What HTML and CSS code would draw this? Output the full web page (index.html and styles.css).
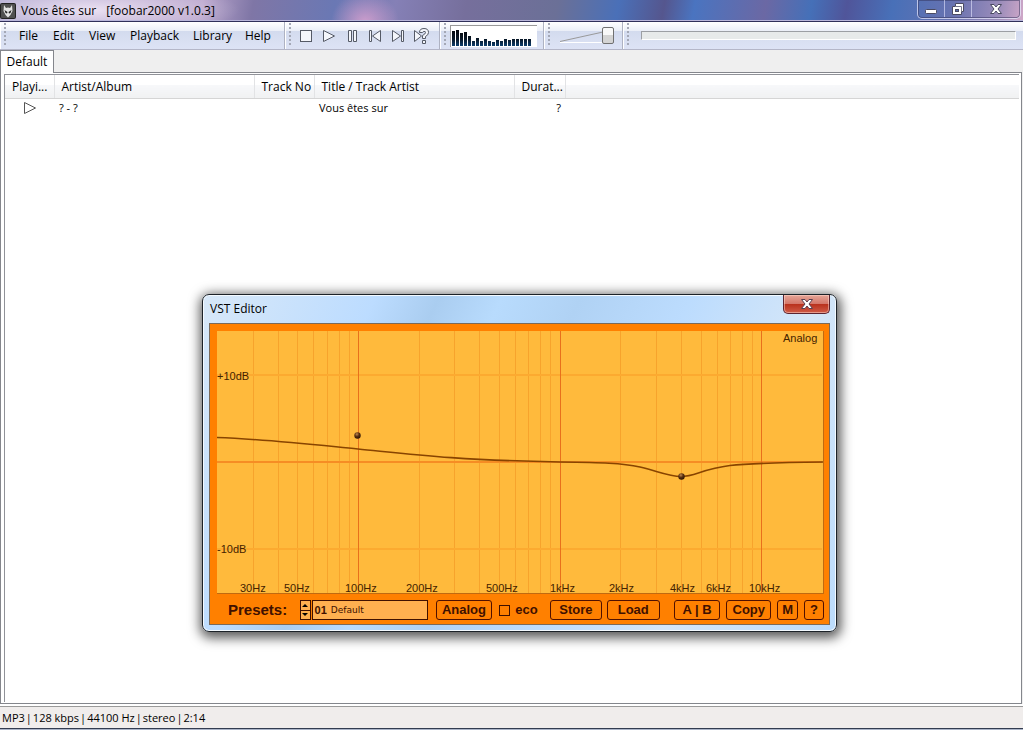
FILE: index.html
```
<!DOCTYPE html>
<html lang="en">
<head>
<meta charset="utf-8">
<title>foobar2000</title>
<link rel="stylesheet" href="styles.css">
</head>
<body>
<div class="app">
  <header class="titlebar">
    <svg class="logo" viewBox="0 0 16 16" aria-hidden="true">
      <rect width="16" height="16" rx="2" fill="#222"/>
      <rect x="1" y="1" width="14" height="14" rx="1" fill="#505050"/>
      <path d="M4 2 L6 5 Q8 4 10 5 L12 2 L12.500 8 Q11 12 8 14.500 Q5 12 3.500 8Z" fill="#e4e4e4"/>
      <path d="M4.500 7 L7.500 9 L7 10.500 L5.500 10Z M11.500 7 L8.500 9 L9 10.500 L10.500 10Z" fill="#222"/>
    </svg>
    <h1 class="title"><span>Vous êtes sur</span><span>[foobar2000 v1.0.3]</span></h1>
    <div class="window-buttons">
      <button aria-label="Minimize"><svg width="14" height="14" viewBox="0 0 14 14"><rect x="1.500" y="7.500" width="11" height="4" rx="1" fill="#fff" stroke="#4a4a62"/></svg></button>
      <button aria-label="Restore"><svg width="14" height="14" viewBox="0 0 14 14"><path d="M4.500 1.500h8v8h-2v3h-9v-8h3z" fill="#fff" stroke="#4a4a62"/><path d="M4 4.500h6.500v5" fill="none" stroke="#77778c"/><rect x="4.500" y="7.500" width="3" height="2" fill="#5b70ae" stroke="#4a4a62"/></svg></button>
      <button aria-label="Close"><svg width="14" height="14" viewBox="0 0 14 14"><path d="M1.500 2.500h3.500l2 2.500 2-2.500h3.500l-3.500 4.500 3.500 4.500h-3.500l-2-2.500-2 2.500h-3.500l3.500-4.500z" fill="#fff" stroke="#4a4a62"/></svg></button>
    </div>
  </header>

  <div class="rebar">
    <nav class="band menu">
      <button>File</button><button>Edit</button><button>View</button><button>Playback</button><button>Library</button><button>Help</button>
    </nav>
    <div class="band transport">
      <button aria-label="Stop"><svg width="16" height="16" viewBox="0 0 16 16"><rect x="2.500" y="2.500" width="11" height="11"/></svg></button>
      <button aria-label="Play"><svg width="16" height="16" viewBox="0 0 16 16"><path d="M2.500 2.500v11l11-5.500z"/></svg></button>
      <button aria-label="Pause"><svg width="16" height="16" viewBox="0 0 16 16"><path d="M4.500 2.500h3v11h-3zM9.500 2.500h3v11h-3z"/></svg></button>
      <button aria-label="Previous"><svg width="16" height="16" viewBox="0 0 16 16"><path d="M2.500 2.500h2v11h-2zM13.500 2.500v11l-8-5.500z"/></svg></button>
      <button aria-label="Next"><svg width="16" height="16" viewBox="0 0 16 16"><path d="M11.500 2.500h2v11h-2zM2.500 2.500v11l8-5.500z"/></svg></button>
      <button aria-label="Random"><svg width="16" height="16" viewBox="0 0 16 16"><path d="M1.500 2.500v11l7-5.500z"/><path d="M6.500 4.500q0-4 4.500-4t4.500 4q0 2.500-3 4v2h-3v-3q3-1.500 3-3t-1.500-1q-1 0-1.500 1zM9.500 12.500h3v3h-3z"/></svg></button>
    </div>
    <div class="band spectrum">
      <svg class="bars" viewBox="0 0 86 21" role="img" aria-label="Spectrum">
        <defs><linearGradient id="bar" x1="0" y1="5" x2="0" y2="21" gradientUnits="userSpaceOnUse"><stop offset="0" stop-color="#05070c"/><stop offset=".5" stop-color="#071524"/><stop offset="1" stop-color="#0d4478"/></linearGradient></defs>
        <path fill="url(#bar)" d="M1 5h3v15h-3zM5 4h3v16h-3zM9 7h3v13h-3zM13 6h3v14h-3zM17 10h3v10h-3zM21 15h3v5h-3zM25 12h3v8h-3zM29 15h3v5h-3zM33 13h3v7h-3zM37 15h3v5h-3zM41 16h3v4h-3zM45 14h3v6h-3zM49 15h3v5h-3zM53 13h3v7h-3zM57 14h3v6h-3zM61 13h3v7h-3zM65 13h3v7h-3zM69 13h3v7h-3zM73 13h3v7h-3zM77 13h3v7h-3z"/>
      </svg>
    </div>
    <div class="band volume">
      <svg width="54" height="16" viewBox="0 0 54 16" aria-hidden="true"><path d="M0 14.500h43" stroke="#fff"/><path d="M0 13.500L43 4" stroke="#999" fill="none"/></svg>
      <input type="range" value="100" aria-label="Volume">
    </div>
    <div class="band seek"><input type="range" value="0" aria-label="Seek"></div>
  </div>

  <div class="tabs" role="tablist"><button role="tab" aria-selected="true">Default</button></div>

  <main class="panel">
    <div class="list">
      <table class="playlist">
        <colgroup><col class="c-play"><col class="c-artist"><col class="c-no"><col class="c-title"><col class="c-dur"><col></colgroup>
        <thead><tr><th>Playi...</th><th>Artist/Album</th><th>Track No</th><th>Title / Track Artist</th><th>Durat...</th><th></th></tr></thead>
        <tbody><tr><td class="playing"><svg width="14" height="14" viewBox="0 0 14 14" role="img" aria-label="Playing"><path d="M1.500 1.500v11l11-5.500z" fill="none" stroke="#555"/></svg></td><td>? - ?</td><td></td><td>Vous êtes sur</td><td class="duration">?</td><td></td></tr></tbody>
      </table>
    </div>
  </main>

  <footer class="status"><span>MP3</span><span>|</span><span>128 kbps</span><span>|</span><span>44100 Hz</span><span>|</span><span>stereo</span><span>|</span><span>2:14</span></footer>
  <div class="taskbar"></div>
</div>

<section class="dialog" role="dialog" aria-labelledby="dialog-title">
  <header class="dialog-head">
    <h2 id="dialog-title">VST Editor</h2>
    <button class="dialog-close" aria-label="Close"><svg width="14" height="14" viewBox="0 0 14 14"><path d="M1.500 2.500h3.500l2 2.500 2-2.500h3.500l-3.500 4.500 3.500 4.500h-3.500l-2-2.500-2 2.500h-3.500l3.500-4.500z" fill="#fff" stroke="#5a4050"/></svg></button>
  </header>
  <div class="editor">
    <svg class="plot" viewBox="0 0 606 262" role="img" aria-label="Equalizer curve">
      <defs><radialGradient id="knob" cx=".4" cy=".3" r=".7"><stop offset="0" stop-color="#c08a50"/><stop offset=".5" stop-color="#5a3010"/><stop offset="1" stop-color="#2c1404"/></radialGradient></defs>
      <path class="grid" d="M36.500 0v262M61.500 0v262M80.500 0v262M96.500 0v262M110.500 0v262M122.500 0v262M132.500 0v262M202.500 0v262M237.500 0v262M262.500 0v262M282.500 0v262M298.500 0v262M311.500 0v262M323.500 0v262M333.500 0v262M403.500 0v262M439.500 0v262M464.500 0v262M484.500 0v262M500.500 0v262M513.500 0v262M525.500 0v262M535.500 0v262"/>
      <path class="level" d="M0 44h605M0 218h605"/>
      <path class="zero" d="M0 131h605"/>
      <path class="decade" d="M141.500 0v262M343.500 0v262M544.500 0v262"/>
      <path class="curve" d="M0 106.500C45 108 90 113 141 118S235 129 343 131C385 131.500 405 132 423 136C440 140 452 145.500 464 145.500C478 145.500 485 138 513 134.500C535 132 570 131.500 606 131"/>
      <circle cx="140.500" cy="104.500" r="3.200" fill="url(#knob)"/><circle cx="464.500" cy="145.500" r="3.200" fill="url(#knob)"/>
      <g class="labels"><text x="0" y="49">+10dB</text><text x="0" y="222">-10dB</text><text x="566" y="11">Analog</text>
      <text x="23" y="261">30Hz</text><text x="67" y="261">50Hz</text><text x="128" y="261">100Hz</text><text x="189" y="261">200Hz</text><text x="269" y="261">500Hz</text><text x="333" y="261">1kHz</text><text x="392" y="261">2kHz</text><text x="453" y="261">4kHz</text><text x="489" y="261">6kHz</text><text x="532" y="261">10kHz</text></g>
    </svg>
    <div class="controls">
      <label class="presets" for="preset">Presets:</label>
      <div class="spin"><button aria-label="Next preset"><svg width="6" height="3" viewBox="0 0 6 3"><path d="M0 3h6l-3-3z"/></svg></button><button aria-label="Previous preset"><svg width="6" height="3" viewBox="0 0 6 3"><path d="M0 0h6l-3 3z"/></svg></button></div>
      <div class="field"><b>01</b><input id="preset" type="text" value="Default"></div>
      <button class="btn w-analog">Analog</button>
      <label class="eco"><input type="checkbox">eco</label>
      <button class="btn w-store">Store</button>
      <button class="btn w-load">Load</button>
      <button class="btn w-ab">A | B</button>
      <button class="btn w-copy">Copy</button>
      <button class="btn w-m">M</button>
      <button class="btn w-help">?</button>
    </div>
  </div>
</section>
</body>
</html>
```
FILE: styles.css
```
* { box-sizing: border-box; }
body { margin: 0; font: 12px/16px "Open Sans", "Noto Sans", sans-serif; color: #000; background: #fff; }
button, input { font: inherit; color: inherit; margin: 0; padding: 0; }
button { border: 0; background: none; }
svg { display: block; }
.app { min-height: 100vh; display: flex; flex-direction: column; background: #efefef; }

.titlebar {
  height: 22px; display: flex; align-items: flex-start; gap: 5px;
  border-bottom: 1px solid #30305a; box-shadow: inset 0 -1px #b9b6da;
  background:
    radial-gradient(ellipse 150px 26px at 90px 10px, rgba(255,245,255,.75), transparent),
    radial-gradient(ellipse 34px 30px at 365px 22px, rgba(225,165,210,.8), transparent),
    linear-gradient(100deg, #aaa4cc 0, #b9a5cc 200px, #7f76a6 250px, #6a78b4 330px, #8580b6 390px, #766f9c 460px, #6b7097 550px, #4a70b8 610px, #55568e 655px, #4a74c0 685px, #6b68a4 755px, #4570b8 800px, #50559a 835px, #4870b8 880px, #6872b0 940px, #9a8cba 985px, #d0a8c8);
}
.logo { width: 16px; height: 16px; margin-top: 3px; }
.title { flex: 1; display: flex; gap: 10px; margin: 3px 0 0; font-size: 12px; font-weight: 400; line-height: 16px; }
.window-buttons { display: flex; height: 19px; margin-right: 2px; border: 1px solid rgba(235,235,255,.7); border-top: 0; border-radius: 0 0 5px 5px; box-shadow: inset 0 0 0 1px rgba(50,50,90,.5); }
.window-buttons button { width: 27px; height: 17px; display: grid; place-items: center; border-right: 1px solid rgba(230,230,255,.6); }
.window-buttons button:last-child { width: 48px; border: 0; }

.rebar { height: 28px; display: grid; grid-template-columns: 285px 155px 104px 79px 1fr; border-bottom: 1px solid #b4b6c8; background: linear-gradient(#fff 0, #eaeef7 9px, #d3dbee 9px, #dde3f5 100%); }
.band { display: flex; align-items: center; border-left: 1px solid #fff; border-right: 1px solid #aeb2c2; background: repeating-linear-gradient(#a4a8b6 0 2px, transparent 2px 4px) 3px 1px / 2px 24px no-repeat; }
.band:last-child { border-right: 0; }
.menu { display: grid; grid-template-columns: 34px 36px 41px 63px 52px 40px; padding-left: 10px; }
.menu button { height: 26px; text-align: left; padding-left: 8px; }
.transport { padding-left: 12px; gap: 7px; }
.transport svg { fill: #f4f6fb; stroke: #555a66; }
.spectrum { padding-left: 9px; }
.bars { width: 87px; height: 22px; background: #fff; border-top: 1px solid #999; border-left: 1px solid #999; }
.volume { display: grid; padding-left: 15px; align-content: center; }
.volume svg, .volume input { grid-area: 1 / 1; }
input[type="range"] { appearance: none; background: none; }
.volume input { width: 54px; height: 16px; }
.volume input::-webkit-slider-thumb { appearance: none; width: 12px; height: 17px; border: 1px solid #707070; border-radius: 2px; background: linear-gradient(#f8f8f8 50%, #d4d4d4 50%); }
.seek { padding: 0 7px 0 17px; }
.seek input { flex: 1; min-width: 0; height: 9px; background: #e7eaea; border: 1px solid; border-color: #9c9fa4 #fff #fff #9c9fa4; }
.seek input::-webkit-slider-thumb { appearance: none; width: 0; height: 0; }

.tabs { height: 22px; display: flex; }
.tabs button { width: 54px; background: #fff; border: 1px solid #84868c; border-bottom: 0; margin-bottom: -1px; z-index: 1; }
.panel { flex: 1; display: flex; padding: 1px 2px 1px 3px; background: #fff; border: 1px solid #84868c; margin-right: 1px; }
.list { flex: 1; border: 1px solid #909298; border-right: 0; border-bottom: 0; }
.playlist { width: 100%; border-collapse: collapse; table-layout: fixed; }
.c-play { width: 49px; } .c-artist { width: 200px; } .c-no { width: 60px; } .c-title { width: 200px; } .c-dur { width: 51px; }
.playlist th { height: 23px; padding: 2px 0 0 7px; text-align: left; font-weight: 400; white-space: nowrap; border-right: 1px solid #e2e3e5; border-bottom: 1px solid #d5d5d5; background: linear-gradient(#fff 45%, #f7f8fa 45%, #f0f1f2); }
.playlist th:last-child { border-right: 0; }
.playlist td { height: 21px; padding: 0 4px 1px 5px; font-size: 11px; white-space: nowrap; }
.playlist .playing { padding-left: 18px; }
.playlist .duration { text-align: right; }
.status { height: 24px; display: flex; gap: 1px; padding: 4px 2px 0; font-size: 11px; border-top: 2px solid #fff; box-shadow: inset 0 1px #9a9a9a; background: #f0edec; }
.taskbar { height: 2px; background: linear-gradient(#333c50 50%, #aab4c8 50%); }

.dialog { position: absolute; left: 202px; top: 294px; width: 635px; padding: 0 6px 6px; border: 1px solid #1c2228; border-radius: 7px; background: linear-gradient(115deg, #d8e8f8 0, #bcdcff 22%, #aacdf0 30%, #b8dbfd 38%, #b0d2f4 48%, #bcdcfe 62%, #d4e6f8 78%, #bcdcfc 100%); box-shadow: inset 0 0 0 1px #f4faff, 1px 3px 12px 3px rgba(0,0,0,.65); }
.dialog-head { display: flex; justify-content: space-between; height: 28px; padding-left: 1px; }
.dialog-head h2 { margin: 6px 0 0; font-size: 12px; line-height: 16px; font-weight: 400; }
.dialog-close { width: 47px; height: 19px; display: grid; place-items: center; border: 1px solid #5c2430; border-top: 0; border-radius: 0 0 5px 5px; background: linear-gradient(#e6a698, #d4776a 48%, #b8301c 50%, #d05c48); box-shadow: inset 0 0 0 1px rgba(255,220,210,.5); }
.editor { padding: 7px 5px 2px 7px; border: 1px solid #7a6a5a; background: #ff8000; }
.plot { width: 100%; background: #ffba3c; border-right: 1px solid #c06a10; border-bottom: 1px solid #c06a10; }
.plot path { fill: none; }
.plot .grid { stroke: #f7a32c; }
.plot .level { stroke: #fcaa30; stroke-width: 2; }
.plot .zero { stroke: #f68d24; stroke-width: 2; }
.plot .decade { stroke: #e8701c; }
.plot .curve { stroke: #884400; stroke-width: 1.6; }
.labels { font: 11px "Liberation Sans", Arial, sans-serif; fill: #442200; }
.controls { display: flex; align-items: center; height: 24px; margin-top: 4px; font: bold 14px/18px "Liberation Sans", Arial, sans-serif; color: #401000; }
.presets { width: 83px; padding-left: 11px; font-size: 15px; }
.spin { width: 11px; height: 20px; display: grid; border: 1px solid #401000; background: #ffb050; }
.spin button { display: grid; place-items: center; }
.spin button + button { border-top: 1px solid #401000; }
.field { width: 116px; height: 20px; display: flex; align-items: center; gap: 4px; margin-left: 1px; padding-left: 2px; border: 1px solid #401000; background: #ffb050; font-size: 11px; }
.field input { flex: 1; min-width: 0; height: 16px; border: 0; background: none; font: 9px "DejaVu Sans", sans-serif; }
.btn { height: 20px; border: 1px solid #501000; border-radius: 3px; margin-left: 5px; font-size: 13px; }
.w-analog { width: 57px; margin-left: 8px; }
.eco { display: flex; align-items: center; gap: 5px; width: 51px; margin-left: 7px; font-size: 13px; }
.eco input { appearance: none; width: 11px; height: 11px; border: 1px solid #401000; }
.w-store { width: 52px; margin-left: 0; }
.w-load { width: 53px; }
.w-ab { width: 47px; margin-left: 14px; }
.w-copy { width: 45px; margin-left: 6px; }
.w-m { width: 21px; margin-left: 6px; }
.w-help { width: 20px; margin-left: 6px; }
```
